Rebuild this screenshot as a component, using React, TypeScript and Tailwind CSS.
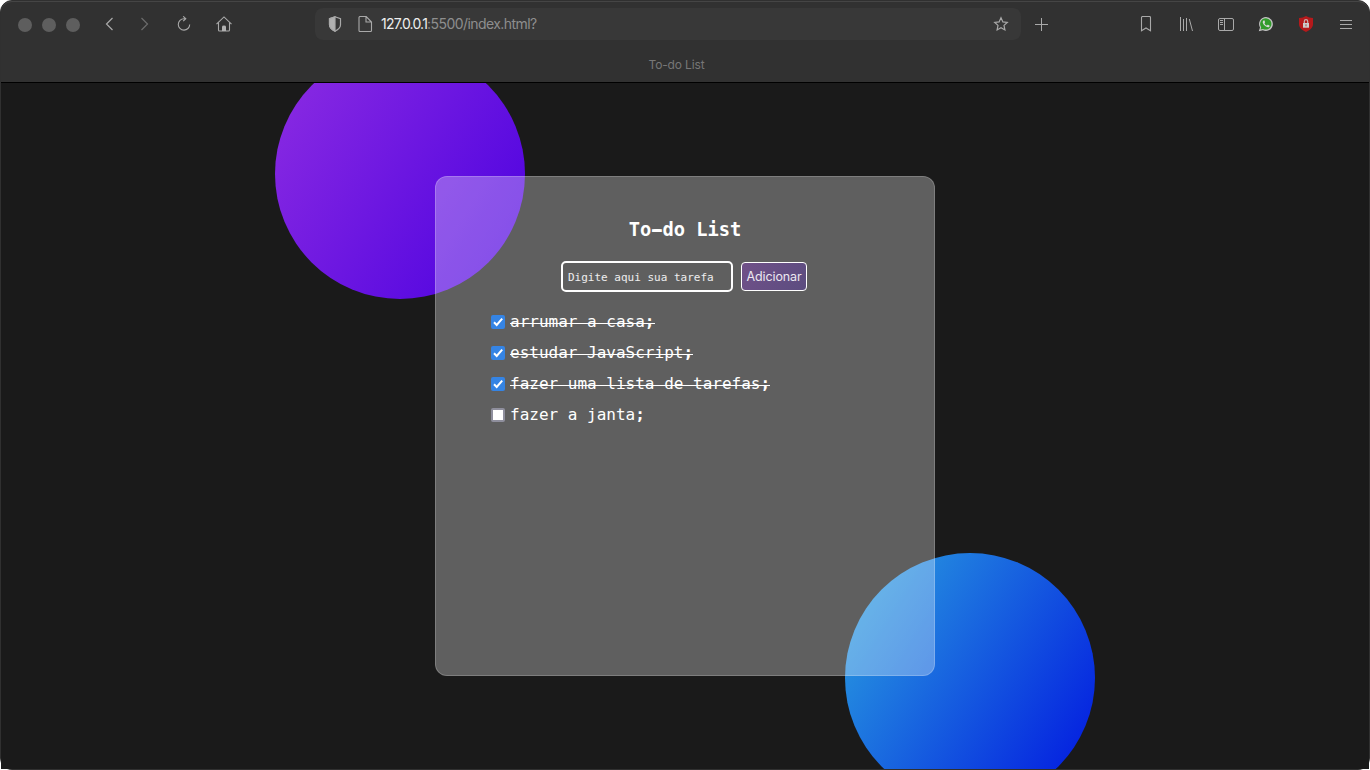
import React, { useState } from "react";

const stroke = { fill: "none", stroke: "#a9a9a9", strokeWidth: 1 };

function Toolbar() {
  return (
    <div className="flex h-[44px] items-center">
      <div className="mt-[2px] ml-[17px] flex w-[62px] gap-[10px]">
        <span className="size-[14px] shrink-0 rounded-full bg-[#5e5e5e]" />
        <span className="size-[14px] shrink-0 rounded-full bg-[#5e5e5e]" />
        <span className="size-[14px] shrink-0 rounded-full bg-[#5e5e5e]" />
      </div>
      <svg className="ml-[21px] size-4" viewBox="0 0 16 16" {...stroke} strokeWidth="1.2"><path d="M11.500 2l-6 6 6 6" /></svg>
      <svg className="ml-[20px] size-4" viewBox="0 0 16 16" fill="none" stroke="#6c6c6c" strokeWidth="1.2"><path d="m4.500 2 6 6-6 6" /></svg>
      <svg className="ml-[23px] size-4" viewBox="0 0 16 16" {...stroke} strokeWidth="1.1">
        <path d="M9.5 2.7H8A5.7 5.7 0 1 0 13.7 8.5M7.2.3l2.6 2.4-2.6 2.5" />
      </svg>
      <svg className="ml-[24px] size-4" viewBox="0 0 16 16" {...stroke} strokeWidth="1.1">
        <path d="M.5 8.2 8 .9l7.5 7.3M2.5 6.7v7.300a1 1 0 0 0 1 1h9a1 1 0 0 0 1-1V6.700" />
        <path d="M6 15v-4.200Q6 9.500 8 9.500t2 1.300V15z" fill="#b1b1b1" stroke="none" />
      </svg>
      <div className="ml-[83px] flex h-8 w-[706px] items-center rounded-lg bg-[#383838]">
        <svg className="ml-[12px] size-4" viewBox="0 0 16 16" {...stroke} strokeWidth="1.2">
          <path d="M8 .8 13.5 2.7v6.1c0 2.8-2.6 5-5.5 6.4-2.9-1.4-5.5-3.6-5.5-6.4V2.7z" />
          <path d="M8 .8 2.5 2.7v6.1c0 2.8 2.6 5 5.5 6.4z" fill="#b1b1b1" />
        </svg>
        <svg className="ml-[14px] size-4" viewBox="0 0 16 16" {...stroke} strokeWidth="1.1">
          <path d="M3 .5h6.2L14.500 6v8.500a1 1 0 0 1-1 1H3a1 1 0 0 1-1-1v-13a1 1 0 0 1 1-1zM9 .7V6h5.300" />
        </svg>
        <span className="ml-[8px] flex-1 text-[14px] leading-5 tracking-[-0.57px] text-[#8e8e8e]">
          <span className="tracking-[-0.8px] text-[#eeeeee]">127.0.0.1</span>:5500/index.html?
        </span>
        <svg className="mr-[12px] size-4" viewBox="0 0 16 16" {...stroke} strokeWidth="1.2">
          <path d="m8 1.8 1.9 4.1 4.4.5-3.3 3 .9 4.500L8 11.700l-3.900 2.200.9-4.500-3.300-3 4.400-.5z" />
        </svg>
      </div>
      <svg className="ml-[12px] size-4" viewBox="0 0 16 16" {...stroke}><path d="M8.500 2v13M2 8.500h13" /></svg>
      <svg className="ml-[89px] size-4" viewBox="0 0 16 16" {...stroke} strokeWidth="1.1">
        <path d="M3.500 14.700V1.500a1 1 0 0 1 1-1h7a1 1 0 0 1 1 1v13.200L8 12z" />
      </svg>
      <svg className="ml-[24px] size-4" viewBox="0 0 16 16" {...stroke}>
        <path d="M2.500 1v14M5.500 3v12M8.500 2v13M11.300 3l3.200 12" />
      </svg>
      <svg className="ml-[24px] size-4" viewBox="0 0 16 16" {...stroke}>
        <rect x=".5" y="2.500" width="15" height="12" rx="1.500" />
        <path d="M6.500 2.500v12M2 4.500h3M2 6.500h3M2 8.500h3" />
      </svg>
      <svg className="ml-[24px] size-4" viewBox="0 0 16 16">
        <path d="M8 1a7 7 0 0 0-6 10.500L.8 15.200l4-.9A7 7 0 1 0 8 1z" fill="#c4c4c4" />
        <path d="M8 2.200a5.700 5.700 0 0 0-4.800 9l-.7 2.300 2.500-.6A5.700 5.700 0 1 0 8 2.200z" fill="#329b2c" />
        <path d="M5.700 4.400c-1.800 1-.8 3.500 1 5.200 2 1.800 4 2.400 4.800.8.300-.8 0-.9-1.500-1.600-.6-.2-.8.900-1.300.7-1-.4-1.900-1.300-2.200-2.100-.2-.4.800-.7.500-1.300-.4-1.200-.6-1.900-1.300-1.700z" fill="#dadada" />
      </svg>
      <svg className="ml-[24px] size-4" viewBox="0 0 16 16">
        <path d="M8 .1c2 1.300 4.300 1.900 7 2v6.100c0 3.300-3.200 6-7 7.800-3.800-1.800-7-4.500-7-7.800V2.100c2.700-.1 5-.7 7-2z" fill="#b5191b" />
        <rect x="5" y="7" width="6" height="4.700" fill="#cccccc" />
        <path d="M6.300 7V5.300a1.700 1.700 0 0 1 3.400 0V7" fill="none" stroke="#c7b0b0" strokeWidth="1.200" />
        <path d="M8 8.300v2" stroke="#aa4444" />
      </svg>
      <svg className="ml-[24px] size-4" viewBox="0 0 16 16" {...stroke}>
        <path d="M2 4.500h12M2 8.500h12M2 12.500h12" />
      </svg>
    </div>
  );
}

function Task({ text, initial }: { text: string; initial: boolean }) {
  const [done, setDone] = useState(initial);
  return (
    <li className="flex h-[31px] items-center">
      <button
        type="button"
        role="checkbox"
        aria-checked={done}
        aria-label={text}
        onClick={() => setDone(!done)}
        className={
          done
            ? "mr-[5px] size-[14px] rounded-[2px] bg-[#3584e4]"
            : "mr-[5px] size-[14px] rounded-[2px] border-2 border-[#8f8f9d] bg-white"
        }
      >
        {done && (
          <svg className="size-[14px]" viewBox="0 0 14 14" fill="none" stroke="white" strokeWidth="2">
            <path d="m3 7.300 2.700 2.700L11.200 3.700" />
          </svg>
        )}
      </button>
      <span
        className={
          done
            ? "relative after:absolute after:inset-x-0 after:top-[11px] after:h-px after:bg-white after:content-['']"
            : ""
        }
      >
        {text.slice(0, -1)}
        <b>{text.slice(-1)}</b>
      </span>
    </li>
  );
}

const tasks = [
  { text: "arrumar a casa;", done: true },
  { text: "estudar JavaScript;", done: true },
  { text: "fazer uma lista de tarefas;", done: true },
  { text: "fazer a janta;", done: false },
];

export default function App() {
  return (
    <div className="h-[770px] w-[1370px] overflow-hidden bg-white">
      <div className="flex h-[770px] flex-col rounded-[12px] border border-[#303030] bg-[#303030] font-['Inter',sans-serif]">
        <header className="h-[82px] shrink-0 rounded-t-[11px] border-t border-b border-t-[#454545] border-b-black bg-[#313131]">
          <Toolbar />
          <div className="mr-[17px] flex h-[37px] items-center justify-center text-[12px] tracking-[-0.15px] text-[#777777]">To-do List</div>
        </header>
        <main className="relative flex flex-1 justify-center overflow-hidden bg-[#1a1a1a] pt-[93px] font-['DejaVu_Sans_Mono',monospace] text-white">
          <div className="absolute top-[-34px] left-[274px] size-[250px] rounded-full bg-[linear-gradient(122deg,#8e2de2,#4a00e0)]" />
          <div className="absolute top-[470px] left-[844px] size-[250px] rounded-full bg-[linear-gradient(122deg,#2ba5df,#0012e0)]" />
          <section className="relative size-[500px] rounded-[12px] border border-white/20 bg-white/30">
            <h3 className="mt-[42px] text-center text-[18.72px] leading-[22px] font-bold">
              To<span className="[text-shadow:2px_0_white,-2px_0_white]">-</span>do List
            </h3>
            <form className="mt-[20px] flex items-center pl-[125px]" onSubmit={(e) => e.preventDefault()}>
              <input
                aria-label="Tarefa"
                placeholder="Digite aqui sua tarefa"
                className="h-[31px] w-[172px] rounded-[5px] border-2 border-white bg-transparent px-[5px] pt-[2px] text-[11px] outline-none placeholder:text-white/90"
              />
              <button className="ml-[8px] h-[29px] w-[66px] rounded-[4px] border border-white bg-[linear-gradient(122deg,#705088,#5c4d80)] pt-px font-['Inter',sans-serif] text-[12.5px] tracking-[-0.1px] text-[#ece8f0]">
                Adicionar
              </button>
            </form>
            <ul className="mt-[14px] pl-[55px] text-[16px] leading-[19px]">
              {tasks.map((t) => (
                <Task key={t.text} text={t.text} initial={t.done} />
              ))}
            </ul>
          </section>
        </main>
      </div>
    </div>
  );
}
